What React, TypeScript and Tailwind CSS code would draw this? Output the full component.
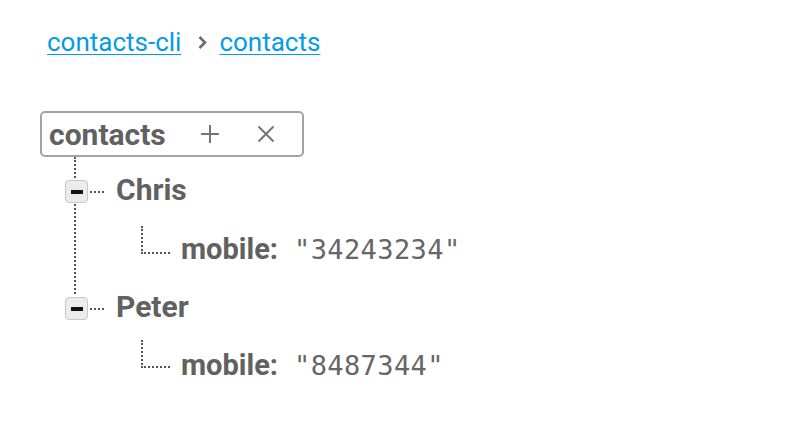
import React from 'react';

const sans = "font-['Roboto','Liberation_Sans',sans-serif]";

function MinusBox() {
  return (
    <span className="mt-1 flex h-[23px] w-[23px] shrink-0 items-center justify-center rounded-[4px] border border-[#c8c8c8] bg-[#ececec]">
      <span className="h-[4px] w-[12px] bg-[#111]" />
    </span>
  );
}

function Leaf({ name, value, height }: { name: string; value: string; height: string }) {
  return (
    <div className={`flex items-center ${height}`}>
      <span className="mt-1 ml-[101px] h-[28px] w-[29px] shrink-0 self-start border-b-2 border-l-2 border-dotted border-[#555]" />
      <div className="ml-[11px] flex items-baseline">
        <span className="text-[29px] font-bold text-[#616161]">{name}:</span>
        <span className="ml-[16px] font-['DejaVu_Sans_Mono',monospace] text-[27px] tracking-[0.4px] text-[#666]">
          "{value}"
        </span>
      </div>
    </div>
  );
}

function Node({
  name,
  value,
  rowH,
  leafH,
}: {
  name: string;
  value: string;
  rowH: string;
  leafH: string;
}) {
  return (
    <div>
      <div className={`flex items-center ${rowH}`}>
        <span className="ml-[25px]">
          <MinusBox />
        </span>
        <span className="mt-1 ml-[2px] w-[14px] border-t-2 border-dotted border-[#555]" />
        <span className="ml-[12px] text-[30px] font-bold text-[#616161]">{name}</span>
      </div>
      <Leaf name="mobile" value={value} height={leafH} />
    </div>
  );
}

export default function App() {
  const data = [
    { name: 'Chris', mobile: '34243234', rowH: 'h-[65px]', leafH: 'h-[55px]' },
    { name: 'Peter', mobile: '8487344', rowH: 'h-[59px]', leafH: 'h-[59px]' },
  ];

  return (
    <div className={`${sans} h-[427px] w-[798px] bg-white pt-[22px] pl-[40px]`}>
      <nav className="ml-[7px] flex h-[40px] items-center text-[26px] text-[#039be5]">
        <a className="underline decoration-1 underline-offset-[3px]" href="#">
          contacts-cli
        </a>
        <svg className="ml-[16px] mr-[11px]" width="11" height="15" viewBox="0 0 11 15">
          <path d="M2.5 2 L8 7.5 L2.5 13" fill="none" stroke="#6b6b6b" strokeWidth="2.6" />
        </svg>
        <a className="underline decoration-1 underline-offset-[3px]" href="#">
          contacts
        </a>
      </nav>

      <div className="mt-[49px] flex h-[46px] w-[264px] items-center rounded-[5px] border-2 border-[#a3a3a3] pl-[7px]">
        <span className="text-[30px] font-bold text-[#616161]">contacts</span>
        <svg className="ml-[34px]" width="20" height="20" viewBox="0 0 20 20">
          <path d="M10 1 V19 M1 10 H19" stroke="#757575" strokeWidth="2" />
        </svg>
        <svg className="ml-[37px]" width="18" height="18" viewBox="0 0 18 18">
          <path d="M1.5 1.5 L16.5 16.5 M16.5 1.5 L1.5 16.5" stroke="#757575" strokeWidth="2" />
        </svg>
      </div>

      <div className="relative">
        <span className="absolute top-0 left-[34px] h-[137px] border-l-2 border-dotted border-[#555]" />
        <div className="relative">
          {data.map((c) => (
            <Node key={c.name} name={c.name} value={c.mobile} rowH={c.rowH} leafH={c.leafH} />
          ))}
        </div>
      </div>
    </div>
  );
}
